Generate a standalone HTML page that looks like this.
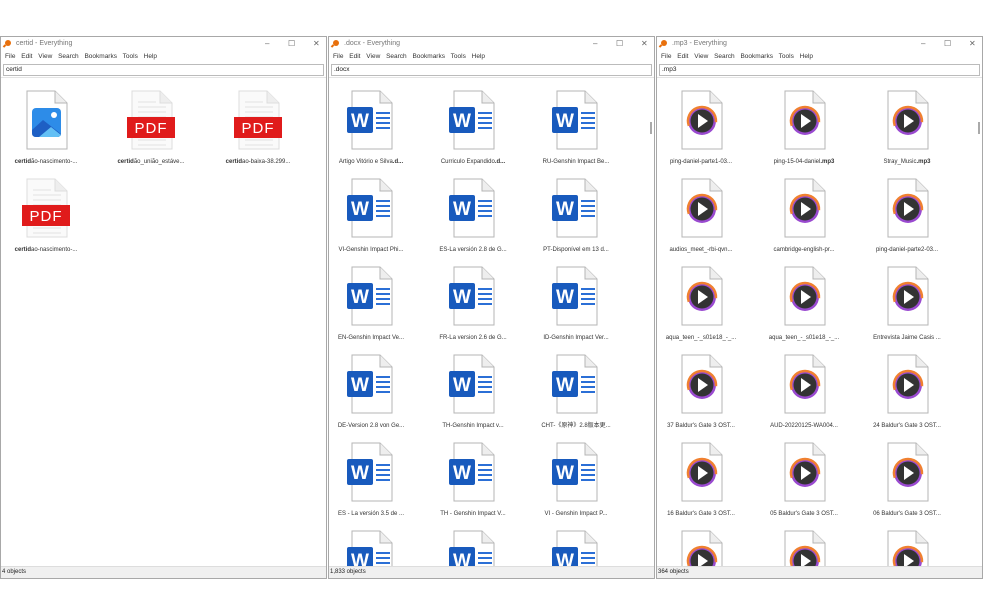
<!DOCTYPE html><html><head><style>
body{margin:0;width:984px;height:615px;background:#fff;position:relative;overflow:hidden;font-family:"Liberation Sans","Noto Sans CJK TC",sans-serif;}
.w{position:absolute;top:36px;height:543px;width:327px;border:1px solid #a8a8a8;background:#fff;box-sizing:border-box;overflow:hidden}
.tb{position:absolute;top:0;left:0;right:0;height:14px;font-size:7px;color:#777;line-height:14px;padding-left:15px}
.tb .k{position:absolute;left:4px;top:3px;width:6px;height:6px;border-radius:50%;background:#e8700c}
.tb .k:after{content:"";position:absolute;left:-2px;top:5px;width:3px;height:2px;background:#e8700c;transform:rotate(-45deg)}
.ctl{position:absolute;top:0;font-size:8px;color:#666}
.mn{position:absolute;top:14px;left:4px;font-size:6.5px;color:#333;line-height:12px;word-spacing:4px}
.sb{position:absolute;top:27px;left:2px;right:2px;height:10px;border:1px solid #bbb;font-size:6.5px;line-height:10px;padding-left:2px;color:#222}
.ct{position:absolute;top:40px;left:0;right:0;height:491px;overflow:hidden;border-top:1px solid #e4e4e4}
.st{position:absolute;bottom:0;left:0;right:0;height:11px;background:#f0f0f0;font-size:6px;line-height:11px;padding-left:1px;color:#222;border-top:1px solid #ddd}
.it{position:absolute;width:100px;text-align:center}
.it svg{display:block;margin:0 auto}
.it div{font-size:6px;color:#333;margin-top:8px;white-space:nowrap;line-height:8px;height:8px;overflow:visible}
.it div span{font-family:"Liberation Sans","Noto Sans CJK TC",sans-serif;display:inline-block;line-height:8px;vertical-align:top}
.scr{position:absolute;right:2px;top:44px;width:2px;height:12px;background:#aaa}
</style></head><body>
<svg width="0" height="0" style="position:absolute"><defs>
<g id="pg"><path d="M6 1H34L46 13V59H6Z" fill="#fff" stroke="#b5b5b5"/><path d="M34 1V13H46" fill="#eee" stroke="#b5b5b5"/></g>
<g id="pgl"><path d="M6 1H34L46 13V59H6Z" fill="#fafafa" stroke="#ddd"/><path d="M34 1V13H46" fill="#eee" stroke="#ddd"/><g stroke="#e2e2e2"><path d="M12 12H30M12 17H40M12 22H40M12 27H40M12 50H40M12 55H40"/></g></g>
<g id="wd"><use href="#pg"/><rect x="1" y="17" width="26" height="26" rx="2" fill="#185abd"/><text x="14" y="37" font-size="19" font-weight="bold" fill="#fff" text-anchor="middle" font-family="Liberation Sans">W</text><g stroke="#2b6fd6" stroke-width="2"><path d="M30 23H44M30 28H44M30 33H44M30 38H44"/></g></g>
<g id="mp"><use href="#pg"/><circle cx="26" cy="31" r="14" fill="#9a4ad0"/><circle cx="26" cy="31" r="14" fill="none" stroke="#f08030" stroke-width="2.5" stroke-dasharray="50 50" transform="rotate(160 26 31)"/><circle cx="26" cy="31" r="11.5" fill="#333"/><path d="M22 24L32 31L22 38Z" fill="#fff"/></g>
<g id="pdf"><use href="#pgl"/><rect x="1" y="27" width="48" height="21" fill="#e01b1b"/><text x="25" y="43" font-size="15" fill="#fff" text-anchor="middle" font-family="Liberation Sans" letter-spacing="1">PDF</text></g>
<g id="img"><use href="#pg"/><rect x="11" y="18" width="29" height="29" rx="4" fill="#2d8ce8"/><path d="M11 40L22 30L40 44V43Q40 47 36 47H15Q11 47 11 43Z" fill="#1e5fc4"/><path d="M18 47L30 37L40 45Q39 47 36 47Z" fill="#63c0f5"/><circle cx="33" cy="25" r="3" fill="#fff"/></g>
</defs></svg>

<div class="w" style="left:0">
<div class="tb"><span class="k"></span>certid - Everything<span class="ctl" style="left:264px">–</span><span class="ctl" style="left:287px">☐</span><span class="ctl" style="left:312px">✕</span></div>
<div class="mn">File Edit View Search Bookmarks Tools Help</div>
<div class="sb">certid</div>
<div class="ct">
<div class="it" style="left:-5px;top:12px"><svg width="50" height="60"><use href="#img"/></svg><div><b>certid</b>ão-nascimento-...</div></div>
<div class="it" style="left:100px;top:12px"><svg width="50" height="60"><use href="#pdf"/></svg><div><b>certid</b>ão_união_estáve...</div></div>
<div class="it" style="left:207px;top:12px"><svg width="50" height="60"><use href="#pdf"/></svg><div><b>certid</b>ao-baixa-38.299...</div></div>
<div class="it" style="left:-5px;top:100px"><svg width="50" height="60"><use href="#pdf"/></svg><div><b>certid</b>ao-nascimento-...</div></div>
</div>
<div class="st">4 objects</div>
</div>

<div class="w" style="left:328px">
<div class="tb"><span class="k"></span>.docx - Everything<span class="ctl" style="left:264px">–</span><span class="ctl" style="left:287px">☐</span><span class="ctl" style="left:312px">✕</span></div>
<div class="mn">File Edit View Search Bookmarks Tools Help</div>
<div class="sb">.docx</div>
<div class="ct">
<div class="scr"></div>
<div class="it" style="left:-8px;top:12px"><svg width="50" height="60"><use href="#wd"/></svg><div>Artigo Vitório e Silva<b>.d...</b></div></div>
<div class="it" style="left:94px;top:12px"><svg width="50" height="60"><use href="#wd"/></svg><div>Curriculo Expandido<b>.d...</b></div></div>
<div class="it" style="left:197px;top:12px"><svg width="50" height="60"><use href="#wd"/></svg><div>RU-Genshin Impact Be...</div></div>
<div class="it" style="left:-8px;top:100px"><svg width="50" height="60"><use href="#wd"/></svg><div>VI-Genshin Impact Phi...</div></div>
<div class="it" style="left:94px;top:100px"><svg width="50" height="60"><use href="#wd"/></svg><div>ES-La versión 2.8 de G...</div></div>
<div class="it" style="left:197px;top:100px"><svg width="50" height="60"><use href="#wd"/></svg><div>PT-Disponível em 13 d...</div></div>
<div class="it" style="left:-8px;top:188px"><svg width="50" height="60"><use href="#wd"/></svg><div>EN-Genshin Impact Ve...</div></div>
<div class="it" style="left:94px;top:188px"><svg width="50" height="60"><use href="#wd"/></svg><div>FR-La version 2.6 de G...</div></div>
<div class="it" style="left:197px;top:188px"><svg width="50" height="60"><use href="#wd"/></svg><div>ID-Genshin Impact Ver...</div></div>
<div class="it" style="left:-8px;top:276px"><svg width="50" height="60"><use href="#wd"/></svg><div>DE-Version 2.8 von Ge...</div></div>
<div class="it" style="left:94px;top:276px"><svg width="50" height="60"><use href="#wd"/></svg><div>TH-Genshin Impact v...</div></div>
<div class="it" style="left:197px;top:276px"><svg width="50" height="60"><use href="#wd"/></svg><div><span>CHT-《原神》2.8版本更...</span></div></div>
<div class="it" style="left:-8px;top:364px"><svg width="50" height="60"><use href="#wd"/></svg><div>ES - La versión 3.5 de ...</div></div>
<div class="it" style="left:94px;top:364px"><svg width="50" height="60"><use href="#wd"/></svg><div>TH - Genshin Impact V...</div></div>
<div class="it" style="left:197px;top:364px"><svg width="50" height="60"><use href="#wd"/></svg><div>VI - Genshin Impact P...</div></div>
<div class="it" style="left:-8px;top:452px"><svg width="50" height="60"><use href="#wd"/></svg></div>
<div class="it" style="left:94px;top:452px"><svg width="50" height="60"><use href="#wd"/></svg></div>
<div class="it" style="left:197px;top:452px"><svg width="50" height="60"><use href="#wd"/></svg></div>
</div>
<div class="st">1,833 objects</div>
</div>

<div class="w" style="left:656px">
<div class="tb"><span class="k"></span>.mp3 - Everything<span class="ctl" style="left:264px">–</span><span class="ctl" style="left:287px">☐</span><span class="ctl" style="left:312px">✕</span></div>
<div class="mn">File Edit View Search Bookmarks Tools Help</div>
<div class="sb">.mp3</div>
<div class="ct">
<div class="scr"></div>
<div class="it" style="left:-6px;top:12px"><svg width="50" height="60"><use href="#mp"/></svg><div>ping-daniel-parte1-03...</div></div>
<div class="it" style="left:97px;top:12px"><svg width="50" height="60"><use href="#mp"/></svg><div>ping-15-04-daniel<b>.mp3</b></div></div>
<div class="it" style="left:200px;top:12px"><svg width="50" height="60"><use href="#mp"/></svg><div>Stray_Music<b>.mp3</b></div></div>
<div class="it" style="left:-6px;top:100px"><svg width="50" height="60"><use href="#mp"/></svg><div>audios_meet_-rbi-qvn...</div></div>
<div class="it" style="left:97px;top:100px"><svg width="50" height="60"><use href="#mp"/></svg><div>cambridge-english-pr...</div></div>
<div class="it" style="left:200px;top:100px"><svg width="50" height="60"><use href="#mp"/></svg><div>ping-daniel-parte2-03...</div></div>
<div class="it" style="left:-6px;top:188px"><svg width="50" height="60"><use href="#mp"/></svg><div>aqua_teen_-_s01e18_-_...</div></div>
<div class="it" style="left:97px;top:188px"><svg width="50" height="60"><use href="#mp"/></svg><div>aqua_teen_-_s01e18_-_...</div></div>
<div class="it" style="left:200px;top:188px"><svg width="50" height="60"><use href="#mp"/></svg><div>Entrevista Jaime Casis ...</div></div>
<div class="it" style="left:-6px;top:276px"><svg width="50" height="60"><use href="#mp"/></svg><div>37 Baldur's Gate 3 OST...</div></div>
<div class="it" style="left:97px;top:276px"><svg width="50" height="60"><use href="#mp"/></svg><div>AUD-20220125-WA004...</div></div>
<div class="it" style="left:200px;top:276px"><svg width="50" height="60"><use href="#mp"/></svg><div>24 Baldur's Gate 3 OST...</div></div>
<div class="it" style="left:-6px;top:364px"><svg width="50" height="60"><use href="#mp"/></svg><div>16 Baldur's Gate 3 OST...</div></div>
<div class="it" style="left:97px;top:364px"><svg width="50" height="60"><use href="#mp"/></svg><div>05 Baldur's Gate 3 OST...</div></div>
<div class="it" style="left:200px;top:364px"><svg width="50" height="60"><use href="#mp"/></svg><div>06 Baldur's Gate 3 OST...</div></div>
<div class="it" style="left:-6px;top:452px"><svg width="50" height="60"><use href="#mp"/></svg></div>
<div class="it" style="left:97px;top:452px"><svg width="50" height="60"><use href="#mp"/></svg></div>
<div class="it" style="left:200px;top:452px"><svg width="50" height="60"><use href="#mp"/></svg></div>
</div>
<div class="st">364 objects</div>
</div>
</body></html>
